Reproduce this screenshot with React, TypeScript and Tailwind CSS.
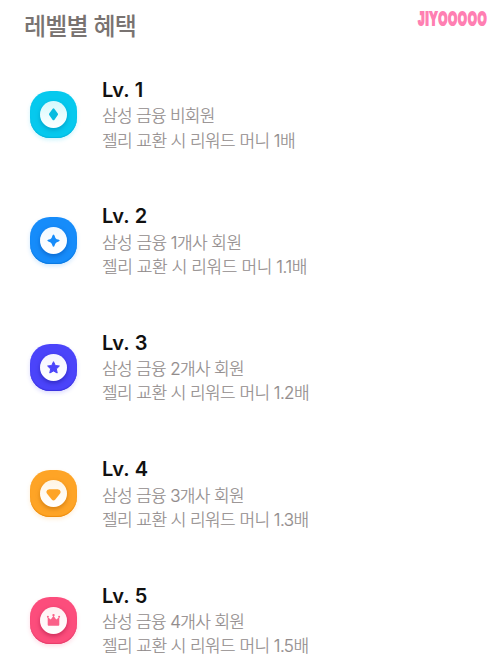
import type { ReactNode } from 'react';

interface Level {
  name: string;
  member: string;
  reward: string;
  memberTracking: string;
  rewardTracking: string;
  tile: string;
  disc: string;
  glyph: ReactNode;
}

const levels: Level[] = [
  {
    name: 'Lv. 1',
    member: '삼성 금융 비회원',
    reward: '젤리 교환 시 리워드 머니 1배',
    memberTracking: 'tracking-[-0.7px]',
    rewardTracking: 'tracking-[-0.57px]',
    tile: 'bg-[#06c9ee] shadow-[inset_0_-1px_1px_#04b4dc,0_2px_4px_#06c9ee33]',
    disc: 'bg-linear-to-b from-[#d3f9fc] to-white shadow-[0_2px_4px_#007fa888]',
    glyph: <path d="M13.5 7.3Q14 7.3 14.5 8L17.8 12.5Q18.3 13.3 17.8 14.1L14.5 18.7Q13.5 20 12.5 18.7L9.2 14.1Q8.7 13.3 9.2 12.5L12.5 8Q13 7.3 13.5 7.3Z" fill="#08bce0" />,
  },
  {
    name: 'Lv. 2',
    member: '삼성 금융 1개사 회원',
    reward: '젤리 교환 시 리워드 머니 1.1배',
    memberTracking: 'tracking-[-0.55px]',
    rewardTracking: 'tracking-[-0.4px]',
    tile: 'bg-[#168cfa] shadow-[inset_0_-1px_1px_#0877df,0_2px_4px_#168cfa33]',
    disc: 'bg-linear-to-b from-[#f2f9ff] to-white shadow-[0_2px_4px_#0049a888]',
    glyph: <path d="M13.5 7.4Q14.3 7.4 14.7 8.9C15.3 11.3 16 11.9 18.2 12.6Q19.7 13 19.7 13.6Q19.7 14.2 18.2 14.7C16 15.3 15.3 16 14.7 18.3Q14.2 19.8 13.5 19.8Q12.8 19.8 12.3 18.3C11.7 16 11 15.3 8.8 14.7Q7.3 14.2 7.3 13.6Q7.3 13 8.8 12.6C11 11.9 11.7 11.3 12.3 8.9Q12.7 7.4 13.5 7.4Z" fill="#168cfa" />,
  },
  {
    name: 'Lv. 3',
    member: '삼성 금융 2개사 회원',
    reward: '젤리 교환 시 리워드 머니 1.2배',
    memberTracking: 'tracking-[-0.65px]',
    rewardTracking: 'tracking-[-0.57px]',
    tile: 'bg-[#4b44fa] shadow-[inset_0_-1px_1px_#3a32dc,0_2px_4px_#4b44fa33]',
    disc: 'bg-linear-to-b from-[#f5f4ff] to-white shadow-[0_2px_4px_#1a129088]',
    glyph: <path d="M13.5 7.7L15.3 11.5L19.4 12L16.4 14.9L17.2 19L13.5 17L9.8 19L10.6 14.9L7.6 12L11.7 11.5Z" fill="#4b44fa" stroke="#4b44fa" strokeWidth="1" strokeLinejoin="round" />,
  },
  {
    name: 'Lv. 4',
    member: '삼성 금융 3개사 회원',
    reward: '젤리 교환 시 리워드 머니 1.3배',
    memberTracking: 'tracking-[-0.65px]',
    rewardTracking: 'tracking-[-0.57px]',
    tile: 'bg-[#fea426] shadow-[inset_0_-1px_1px_#ed8c0c,0_2px_4px_#fea42633]',
    disc: 'bg-linear-to-b from-[#fff5e4] to-white shadow-[0_2px_4px_#b0600088]',
    glyph: <path d="M9.3 9.2H17.7Q20.4 9.4 20.6 11.7Q20.6 13 19.7 14.1L15.3 19.4Q13.5 21.4 11.7 19.4L7.3 14.1Q6.4 13 6.4 11.7Q6.6 9.4 9.3 9.2Z" fill="#fea426" />,
  },
  {
    name: 'Lv. 5',
    member: '삼성 금융 4개사 회원',
    reward: '젤리 교환 시 리워드 머니 1.5배',
    memberTracking: 'tracking-[-0.65px]',
    rewardTracking: 'tracking-[-0.57px]',
    tile: 'bg-[#fc4d7c] shadow-[inset_0_-1px_1px_#e63b69,0_2px_4px_#fc4d7c33]',
    disc: 'bg-linear-to-b from-[#fff0f2] to-white shadow-[0_2px_4px_#a0103c88]',
    glyph: (
      <g fill="#fa6088">
        <path d="M7.7 10.2L10.8 12.6L13.5 8.7L16.2 12.6L19.3 10.2V17.8Q19.3 18.7 18.4 18.7H8.6Q7.7 18.7 7.7 17.8Z" />
        <circle cx="7.9" cy="9.7" r="1" />
        <circle cx="13.5" cy="8.1" r="1.2" />
        <circle cx="19.1" cy="9.7" r="1" />
      </g>
    ),
  },
];

function LevelIcon({ level }: { level: Level }) {
  return (
    <div className={`mt-[14px] flex h-[47px] w-[47px] shrink-0 items-center justify-center rounded-[20px] ${level.tile}`}>
      <div className={`h-[27px] w-[27px] rounded-full ${level.disc}`}>
        <svg viewBox="0 0 27 27" className="h-[27px] w-[27px]">{level.glyph}</svg>
      </div>
    </div>
  );
}

export default function App() {
  return (
    <main className="h-[672px] overflow-hidden bg-white font-['Inter','Noto_Sans_CJK_KR',sans-serif]">
      <header className="flex h-[77px] items-start justify-between pr-[12.5px] pl-6">
        <h1 className="pt-[11px] text-[24px] leading-8 font-medium tracking-[-0.8px] text-[#797371]">레벨별 혜택</h1>
        <span className="mt-[6px] origin-right scale-x-[0.59] font-['Liberation_Sans',sans-serif] text-[19px] leading-[26px] font-bold tracking-[1.9px] text-[#ff7fb2] [-webkit-text-stroke:2.2px_#ff7fb2]">
          JIYOOOOO
        </span>
      </header>
      <ul>
        {levels.map((level) => (
          <li key={level.name} className="flex h-[126.4px] items-start gap-[25px] pl-[30px]">
            <LevelIcon level={level} />
            <div className="whitespace-nowrap">
              <h2 className="mb-[1.4px] text-[20px] leading-[26px] font-semibold tracking-[0.2px] text-[#111]">{level.name}</h2>
              <div className="text-[17px] leading-[24.2px] font-light text-[#918b8b] [-webkit-text-stroke:0.2px_#918b8b]">
                <p className={level.memberTracking}>{level.member}</p>
                <p className={level.rewardTracking}>{level.reward}</p>
              </div>
            </div>
          </li>
        ))}
      </ul>
    </main>
  );
}
